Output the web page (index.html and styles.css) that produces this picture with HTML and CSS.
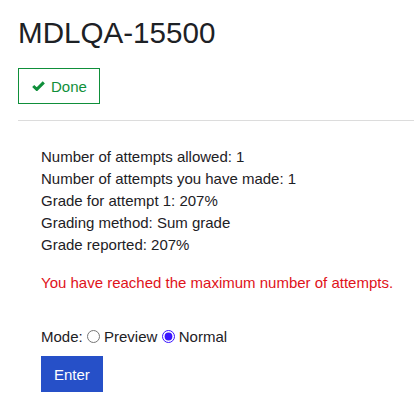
FILE: index.html
```html
<!DOCTYPE html>
<html lang="en">
<head>
    <meta charset="UTF-8">
    <meta name="viewport" content="width=device-width, initial-scale=1.0">
    <title>MDLQA-15500</title>
    <link rel="stylesheet" href="styles.css">
</head>
<body>

<div class="page">
    <h2 class="title">MDLQA-15500</h2>

    <button class="done-button" type="button">
        <svg class="check" width="13" height="10" viewBox="0 0 13 10">
            <path d="M1.2 5 L4.8 8.4 L11.8 1.4" fill="none" stroke="currentColor" stroke-width="3" stroke-linejoin="miter"/>
        </svg>
        Done
    </button>

    <hr class="divider">

    <div class="summary">
        <p>Number of attempts allowed: 1</p>
        <p>Number of attempts you have made: 1</p>
        <p>Grade for attempt 1: 207%</p>
        <p>Grading method: Sum grade</p>
        <p>Grade reported: 207%</p>

        <p class="warning">You have reached the maximum number of attempts.</p>

        <form class="mode-form">
            <div class="mode-row">
                Mode:
                <input type="radio" id="preview" name="mode" value="preview">
                <label for="preview">Preview</label>
                <input type="radio" id="normal" name="mode" value="normal" checked>
                <label for="normal">Normal</label>
            </div>
            <button class="enter-button" type="button">Enter</button>
        </form>
    </div>
</div>

</body>
</html>
```

FILE: styles.css
```css
body {
    font-family: 'Liberation Sans', Arial, sans-serif;
    color: #1d2125;
    background-color: #ffffff;
    margin: 0;
    padding: 0;
}
.page {
    padding: 15px 0 0 18px;
}
.title {
    font-size: 29.6px;
    font-weight: normal;
    line-height: 35px;
    margin: 0 0 18px 0;
}
.done-button {
    display: flex;
    align-items: center;
    gap: 6px;
    height: 36px;
    padding: 0 12px 0 13px;
    background: #ffffff;
    border: 1px solid #0f8f3a;
    color: #0f8f3a;
    font-family: inherit;
    font-size: 15px;
    cursor: pointer;
}
.check {
    display: block;
}
.divider {
    border: none;
    border-top: 1px solid #dcdcdc;
    margin: 16px 0 0 0;
}
.summary {
    padding: 25px 0 0 23px;
    font-size: 15px;
    line-height: 22px;
}
.summary p {
    margin: 0;
}
.summary .warning {
    color: #e0121a;
    margin-top: 16px;
}
.mode-form {
    margin-top: 32px;
}
.mode-row input[type=radio] {
    margin: 0;
    vertical-align: -1px;
    accent-color: #3a14ff;
}
.enter-button {
    margin-top: 8px;
    height: 36px;
    padding: 0 13px;
    background-color: #2650c8;
    color: #ffffff;
    border: none;
    font-family: inherit;
    font-size: 15px;
    cursor: pointer;
}
```
